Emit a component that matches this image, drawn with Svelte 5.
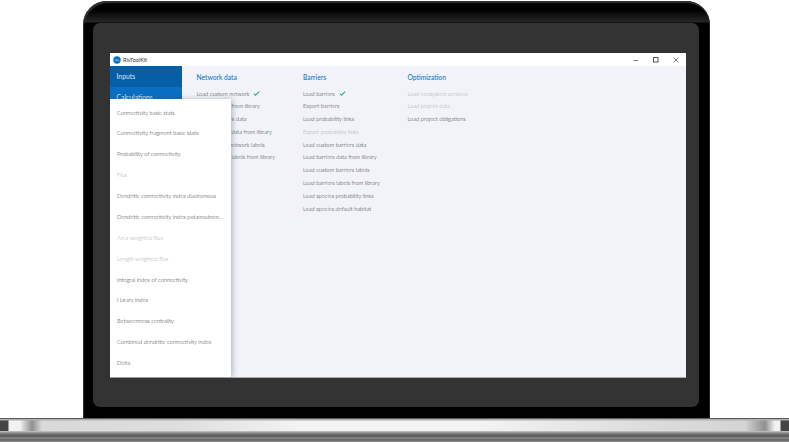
<script>
  const check = true;
  const cols = [
    { title: 'Network data', cls: 'c1', items: [['Load custom network', 0, check], ['Load network from library'], ['Export network data'], ['Load network data from library'], ['Load custom network labels'], ['Load network labels from library']] },
    { title: 'Barriers', cls: 'c2', items: [['Load barriers', 0, check], ['Export barriers'], ['Load probability links'], ['Export probability links', 1], ['Load custom barriers data'], ['Load barriers data from library'], ['Load custom barriers labels'], ['Load barriers labels from library'], ['Load species probability links'], ['Load species default habitat']] },
    { title: 'Optimization', cls: 'c3', items: [['Load ecosystem services', 1], ['Load project data', 1], ['Load project obligations']] }
  ];
  const menu = [
    ['Connectivity basic stats'], ['Connectivity fragment basic stats'], ['Probability of connectivity'], ['Flux', 1],
    ['Dendritic connectivity index diadromous'], ['Dendritic connectivity index potamodrom...'], ['Area weighted flux', 1], ['Length weighted flux', 1],
    ['Integral index of connectivity'], ['Harary index'], ['Betweenness centrality'], ['Combined dendritic connectivity index'], ['Delta']
  ];
</script>

<div class="stage">
  <div class="lid">
    <div class="bezel">
      <div class="screen">
        <header class="titlebar">
          <div class="brand">
            <svg class="logo" viewBox="0 0 8 8"><circle cx="4" cy="4" r="3.7" fill="#0a74c9"/><path d="M2 4.600c.8-1 1.500-1 2-.4s1.300.5 2-.4" fill="none" stroke="#cfe6f8" stroke-width=".7"/></svg>
            <span>RivToolKit</span>
          </div>
          <div class="win">
            <svg viewBox="0 0 8 8"><path d="M1.500 4.500h4.500" stroke="#777" fill="none"/></svg>
            <svg viewBox="0 0 8 8"><rect x="1.500" y="1.500" width="4.500" height="4.500" stroke="#555" fill="none"/></svg>
            <svg viewBox="0 0 8 8"><path d="M1.500 1.500l5 5M6.500 1.500l-5 5" stroke="#555" stroke-width=".8" fill="none"/></svg>
          </div>
        </header>
        <div class="body">
          <nav class="side">
            <div class="tab active">Inputs</div>
            <div class="tab">Calculations</div>
          </nav>
          <main class="content">
            {#each cols as col}
              <section class="col {col.cls}">
                <h2>{col.title}</h2>
                <ul>
                  {#each col.items as it}
                    <li class:off={it[1]}>{it[0]}{#if it[2]}<svg class="tick" viewBox="0 0 8 6"><path d="M.8 3.200l2 1.800L7.200.8" fill="none" stroke="#22b573" stroke-width="1.300"/></svg>{/if}</li>
                  {/each}
                </ul>
              </section>
            {/each}
          </main>
          <div class="menu">
            {#each menu as m}
              <div class="mi" class:off={m[1]}>{m[0]}</div>
            {/each}
          </div>
        </div>
      </div>
    </div>
  </div>
  <div class="base"></div>
</div>

<style>
  :global(body) { margin: 0; background: #fff; }
  .stage { width: 789px; height: 442px; overflow: hidden; display: flex; flex-direction: column; background: #fff; font-family: Lato, "Open Sans", sans-serif; }
  .lid { box-sizing: border-box; width: 627px; height: 417px; margin: 1px 0 0 83px; padding: 22px 11px 11px 10px; background: linear-gradient(#000 0 9px, #262626 21px, #000 22px); border-radius: 24px 24px 0 0; box-shadow: inset 1px 2px 1px #333, inset -1px 0 1px #222; flex: none; }
  .bezel { box-sizing: border-box; height: 384px; padding: 30px 13px 29px 17px; background: #333; border-radius: 7px; }
  .screen { height: 325px; display: flex; flex-direction: column; background: #f1f3f9; border-bottom: 1px solid #aaa; box-sizing: border-box; }
  .titlebar { height: 13px; flex: none; background: #fff; display: flex; justify-content: space-between; align-items: center; }
  .brand { display: flex; align-items: center; gap: 2px; padding-left: 3px; font-size: 5.500px; color: #333; }
  .logo { width: 8px; height: 8px; }
  .win { display: flex; gap: 12px; padding-right: 6px; }
  .win svg { width: 8px; height: 8px; }
  .body { position: relative; flex: 1; display: flex; min-height: 0; }
  .side { width: 72px; flex: none; background: #0a6fc2; }
  .tab { height: 21px; padding-left: 6.500px; line-height: 20px; font-size: 6.800px; color: #d5e8f8; }
  .active { background: #055ea6; }
  .content { flex: 1; position: relative; display: flex; padding: 5px 0 0 14.500px; }
  .col { flex: none; }
  .c1 { width: 106.500px; }
  .c2 { width: 104.500px; }
  h2 { margin: 0 0 4.500px; font-size: 6.700px; line-height: 12px; font-weight: 500; color: #0f7acb; }
  ul { list-style: none; margin: 0; padding: 0; }
  li { height: 12.800px; line-height: 12.800px; font-size: 5.700px; font-weight: 300; color: #2a2a30; white-space: nowrap; display: flex; align-items: center; }
  li.off { color: #a4a6ac; }
  .tick { width: 7px; height: 5px; margin-left: 4px; }
  .menu { position: absolute; left: 0; top: 33px; bottom: 0; width: 121px; background: #fff; box-shadow: 2px 0 5px rgba(60,60,90,.3); box-sizing: border-box; padding-top: 3.500px; }
  .mi { height: 20.880px; line-height: 20.880px; padding-left: 7px; font-size: 5.700px; font-weight: 300; color: #2a2a30; white-space: nowrap; }
  .mi.off { color: #a0a2a8; }
  .base { height: 24px; flex: none; background:
      linear-gradient(#5c5c5c 0 1px, #b0b0b0 1px 2px, transparent 3px),
      linear-gradient(transparent 0 13px, #c9c9c9 13px, #8a8a8a 15px, #555 18px, #8c8c8c 20px, #5c5c5c 22px, #9a9a9a 24px),
      linear-gradient(90deg, #444 0 8px, #f2f2f2 9px 20px, #8f8f8f 32px, #d9d9d9 42px, #dedede 180px, #f3f3f3 300px, #f3f3f3 480px, #dcdcdc 650px, #d4d4d4 745px, #8f8f8f 765px, #f2f2f2 775px 780px, #444 781px); }
</style>
